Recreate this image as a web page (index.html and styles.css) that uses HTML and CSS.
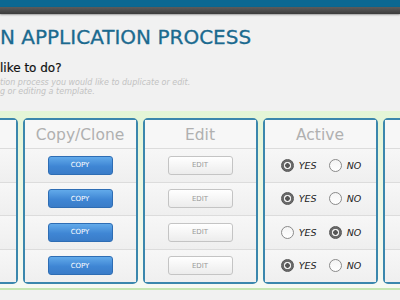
FILE: index.html
```html
<!DOCTYPE html>
<html lang="en">
<head>
  <meta charset="UTF-8" />
  <title>Application Process</title>
  <link rel="stylesheet" href="styles.css">
</head>
<body>
  <header>
    <div class="topbar"></div>
    <div class="subbar"></div>
  </header>

  <main>
    <h1 class="title">N APPLICATION PROCESS</h1>
    <h2 class="question">like to do?</h2>
    <p class="hint">tion process you would like to duplicate or edit.<br>g or editing a template.</p>

    <!-- process table -->
    <section class="panel">
      <div class="col">
        <div class="col-head"></div>
        <div class="cell"></div>
        <div class="cell"></div>
        <div class="cell"></div>
        <div class="cell"></div>
      </div>

      <div class="col">
        <div class="col-head">Copy/Clone</div>
        <div class="cell"><button class="btn btn-copy">COPY</button></div>
        <div class="cell"><button class="btn btn-copy">COPY</button></div>
        <div class="cell"><button class="btn btn-copy">COPY</button></div>
        <div class="cell"><button class="btn btn-copy">COPY</button></div>
      </div>

      <div class="col">
        <div class="col-head">Edit</div>
        <div class="cell"><button class="btn btn-edit">EDIT</button></div>
        <div class="cell"><button class="btn btn-edit">EDIT</button></div>
        <div class="cell"><button class="btn btn-edit">EDIT</button></div>
        <div class="cell"><button class="btn btn-edit">EDIT</button></div>
      </div>

      <div class="col">
        <div class="col-head">Active</div>
        <div class="cell radios">
          <span class="radio on"></span><span class="lbl">YES</span>
          <span class="radio"></span><span class="lbl">NO</span>
        </div>
        <div class="cell radios">
          <span class="radio on"></span><span class="lbl">YES</span>
          <span class="radio"></span><span class="lbl">NO</span>
        </div>
        <div class="cell radios">
          <span class="radio"></span><span class="lbl">YES</span>
          <span class="radio on"></span><span class="lbl">NO</span>
        </div>
        <div class="cell radios">
          <span class="radio on"></span><span class="lbl">YES</span>
          <span class="radio"></span><span class="lbl">NO</span>
        </div>
      </div>

      <div class="col">
        <div class="col-head"></div>
        <div class="cell"></div>
        <div class="cell"></div>
        <div class="cell"></div>
        <div class="cell"></div>
      </div>
    </section>
  </main>
</body>
</html>
```

FILE: styles.css
```css
body {
  margin: 0;
  font-family: "DejaVu Sans", Verdana, sans-serif;
  background: #f1f1f1;
  color: #222;
  overflow: hidden;
}

.topbar {
  height: 7px;
  background: #0b6892;
}

.subbar {
  height: 7px;
  background: linear-gradient(#5c5c5c, #3c3c3c);
  box-shadow: 0 1px 2px rgba(0,0,0,0.35);
}

main {
  padding-top: 11px;
}

.title {
  margin: 0;
  font-size: 20px;
  line-height: 24px;
  font-weight: normal;
  color: #1b6a8f;
  -webkit-text-stroke: 0.3px #1b6a8f;
}

.question {
  margin: 12px 0 0;
  font-size: 12px;
  line-height: 14px;
  font-weight: normal;
  color: #111;
  -webkit-text-stroke: 0.2px #111;
}

.hint {
  margin: 3px 0 0;
  font-size: 8px;
  line-height: 9px;
  font-style: italic;
  color: #c2c2c2;
}

.panel {
  margin-top: 15px;
  padding: 7px 0 4px;
  display: flex;
  justify-content: center;
  gap: 5px;
  background: linear-gradient(#e3f5d6, #f6f9f3);
  border-bottom: 2px solid #c6e6b2;
}

.col {
  flex: 0 0 115px;
  box-sizing: border-box;
  border: 2px solid #3b87ad;
  border-radius: 5px;
  background: #f3f3f3;
}

.col-head {
  height: 28px;
  line-height: 30px;
  text-align: center;
  font-size: 15.5px;
  color: #b0b0b0;
  background: #f7f7f7;
}

.cell {
  height: 33.5px;
  box-sizing: border-box;
  border-top: 1px solid #dcdcdc;
  display: flex;
  align-items: center;
  justify-content: center;
  background: linear-gradient(#f7f7f7, #efefef);
}

.btn {
  width: 65px;
  height: 19px;
  padding: 0;
  font-family: "DejaVu Sans", sans-serif;
  font-size: 7px;
  border-radius: 3px;
  cursor: pointer;
}

.btn-copy {
  color: #fff;
  border: 1px solid #2e6db4;
  background: linear-gradient(#62aaea, #3f86d4 55%, #3a7cc8);
}

.btn-edit {
  color: #9a9a9a;
  border: 1px solid #c4c4c4;
  background: linear-gradient(#ffffff, #ececec);
}

.radios {
  gap: 0;
  padding-left: 2px;
}

.radio {
  width: 13px;
  height: 13px;
  box-sizing: border-box;
  border-radius: 50%;
  border: 1px solid #8a8a8a;
  background: linear-gradient(#f4f4f4, #ffffff);
}

.radio.on {
  border-color: #555;
  background: radial-gradient(circle, #555 0 2px, #eee 2.6px 3.4px, #6a6a6a 4px);
}

.lbl {
  margin: 0 12px 0 5px;
  font-size: 9.5px;
  font-style: italic;
  color: #222;
}

.lbl:last-child {
  margin-right: 0;
}
```
